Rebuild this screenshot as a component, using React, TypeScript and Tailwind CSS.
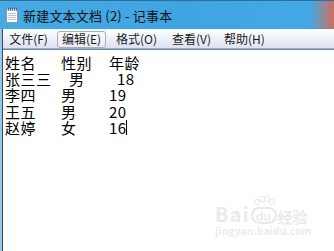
import React from 'react';

const rows: { cells: [string, number][]; cursor?: boolean }[] = [
  { cells: [['姓名', 56], ['性别', 48], ['年龄', 40]] },
  { cells: [['张三三', 64], ['男', 48], ['18', 24]] },
  { cells: [['李四', 56], ['男', 48], ['19', 24]] },
  { cells: [['王五', 56], ['男', 48], ['20', 24]] },
  { cells: [['赵婷', 56], ['女', 48], ['16', 17]], cursor: true },
];

const menus: [string, number][] = [
  ['文件(F)', 49],
  ['编辑(E)', 49],
  ['格式(O)', 53],
  ['查看(V)', 49],
  ['帮助(H)', 49],
];

function NotepadIcon() {
  return (
    <svg width="13" height="16" viewBox="0 0 13 16">
      <rect x="0.5" y="2.5" width="11" height="13" fill="#f7f9fb" stroke="#8a97a6" />
      <rect x="1" y="2" width="10" height="2" fill="#c9d3de" />
      {[2, 4, 6, 8, 10].map((x) => (
        <rect key={x} x={x} y="0.5" width="1" height="3" fill="#5b6570" />
      ))}
      {[6.5, 8.5, 10.5, 12.5].map((y) => (
        <line key={y} x1="2" y1={y} x2="10" y2={y} stroke="#b9c7d6" strokeWidth="1" />
      ))}
    </svg>
  );
}

export default function App() {
  return (
    <div
      className="w-[334px] h-[251px] overflow-hidden flex flex-col bg-white"
      style={{ fontFamily: '"Noto Sans CJK SC", "Noto Sans", sans-serif' }}
    >
      {/* Title bar */}
      <div className="h-[29px] shrink-0 border-t border-[#2f6f9c] bg-[linear-gradient(90deg,#47aae5_0%,#3fa4e2_55%,#44a8e4_93%,#cf6f5c_100%)] flex items-center pl-[6px] gap-[4px]">
        <NotepadIcon />
        <span className="text-[13px] leading-none text-[#111] tracking-[0.2px]">新建文本文档 (2) - 记事本</span>
      </div>

      <div className="flex-1 flex min-h-0">
        {/* left window frame */}
        <div className="w-[2px] bg-[#93c9ec]" />
        <div className="flex-1 flex flex-col border-l border-[#40464f] min-h-0">
          <div className="h-[1px] bg-[#f6f9fc]" />
          {/* Menu bar */}
          <div className="h-[19px] shrink-0 bg-[linear-gradient(180deg,#fdfdfe_0%,#eef1f8_45%,#dde2f0_100%)] flex items-center pl-[1px] gap-[4px] border-b border-[#a7adbb]">
            {menus.map(([label, w], i) => (
              <div
                key={label}
                className={`h-[17px] flex items-center justify-center rounded-[3px] text-[12px] leading-none text-[#1a1a1a] ${
                  i === 1
                    ? 'border border-[#a9afba] bg-[linear-gradient(180deg,#fbfbfc_0%,#e8ebf1_100%)]'
                    : 'border border-transparent'
                }`}
                style={{ width: w }}
              >
                {label}
              </div>
            ))}
          </div>

          {/* Edit area */}
          <div className="relative flex-1 border-t border-[#5a86b4] bg-white pt-[4px] pl-[2px]">
            {rows.map((row, ri) => (
              <div key={ri} className="flex items-center h-[16.4px] text-[15px] leading-[15px] text-black">
                {row.cells.map(([t, w], ci) => (
                  <span key={ci} className="inline-block whitespace-pre tracking-[0.5px]" style={{ width: w }}>
                    {t}
                  </span>
                ))}
                {row.cursor && <span className="w-px h-[15px] bg-black" />}
              </div>
            ))}

            {/* Baidu jingyan watermark */}
            <div className="absolute left-[212px] top-[146px] flex flex-col items-start text-[#ebebeb] select-none">
              <div className="flex items-end">
                <span className="text-[20px] leading-none font-bold tracking-[1px]">Bai</span>
                <div className="relative flex flex-col items-center mx-[1px]">
                  <svg width="22" height="10" viewBox="0 0 22 10" className="mb-[1px]">
                    <ellipse cx="4" cy="6" rx="2.5" ry="3" fill="none" stroke="#e8e8e8" />
                    <ellipse cx="9" cy="3" rx="2.5" ry="3" fill="none" stroke="#e8e8e8" />
                    <ellipse cx="14" cy="3" rx="2.5" ry="3" fill="none" stroke="#e8e8e8" />
                    <ellipse cx="19" cy="6" rx="2.5" ry="3" fill="none" stroke="#e8e8e8" />
                  </svg>
                  <span className="w-[26px] h-[17px] rounded-full border-2 border-[#e8e8e8] text-[12px] leading-none flex items-center justify-center font-bold">
                    du
                  </span>
                </div>
                <span className="text-[15px] leading-none font-bold">经验</span>
              </div>
              <span className="text-[10px] leading-none mt-[2px] font-bold tracking-[0.3px]">jingyan.baidu.com</span>
            </div>
          </div>
        </div>
      </div>
    </div>
  );
}
